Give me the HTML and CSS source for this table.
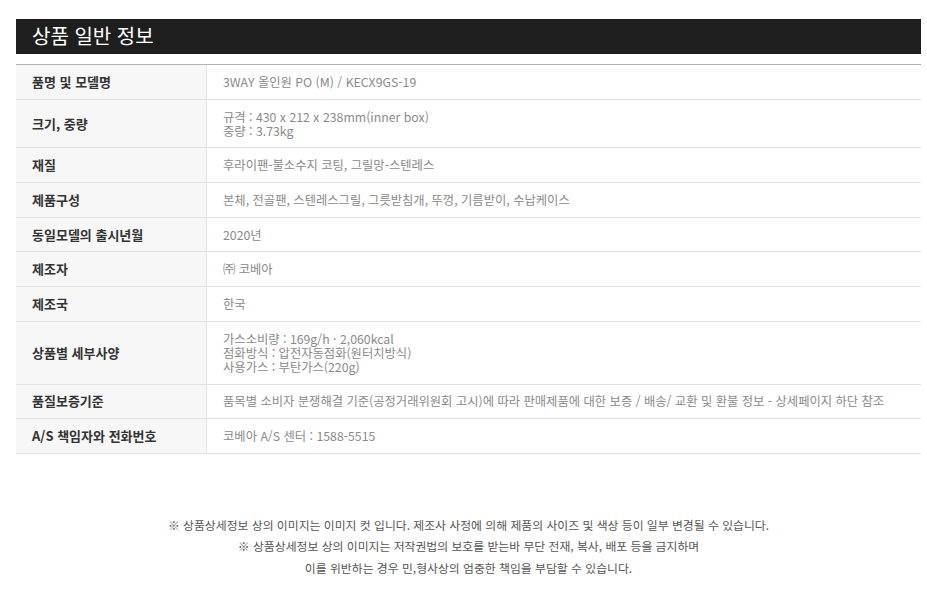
FILE: index.html
```html
<!DOCTYPE html>
<html lang="ko">
<head>
<meta charset="utf-8">
<title>상품 일반 정보</title>
<link rel="stylesheet" href="styles.css">
</head>
<body>
<div class="wrap">
  <h2 class="title">상품 일반 정보</h2>
  <div class="table">
    <div class="row"><div class="th">품명 및 모델명</div><div class="td">3WAY 올인원 PO (M) / KECX9GS-19</div></div>
    <div class="row"><div class="th">크기, 중량</div><div class="td"><span class="ln">규격 : 430 x 212 x 238mm(inner box)</span><span class="ln">중량 : 3.73kg</span></div></div>
    <div class="row"><div class="th">재질</div><div class="td">후라이팬-불소수지 코팅, 그릴망-스텐레스</div></div>
    <div class="row"><div class="th">제품구성</div><div class="td">본체, 전골팬, 스텐레스그릴, 그릇받침개, 뚜껑, 기름받이, 수납케이스</div></div>
    <div class="row"><div class="th">동일모델의 출시년월</div><div class="td">2020년</div></div>
    <div class="row"><div class="th">제조자</div><div class="td">㈜ 코베아</div></div>
    <div class="row"><div class="th">제조국</div><div class="td">한국</div></div>
    <div class="row"><div class="th">상품별 세부사양</div><div class="td"><span class="ln">가스소비량 : 169g/h · 2,060kcal</span><span class="ln">점화방식 : 압전자동점화(원터치방식)</span><span class="ln">사용가스 : 부탄가스(220g)</span></div></div>
    <div class="row"><div class="th">품질보증기준</div><div class="td">품목별 소비자 분쟁해결 기준(공정거래위원회 고시)에 따라 판매제품에 대한 보증 / 배송/ 교환 및 환불 정보 - 상세페이지 하단 참조</div></div>
    <div class="row"><div class="th">A/S 책임자와 전화번호</div><div class="td">코베아 A/S 센터 : 1588-5515</div></div>
  </div>
  <div class="notice">
    <p>※ 상품상세정보 상의 이미지는 이미지 컷 입니다. 제조사 사정에 의해 제품의 사이즈 및 색상 등이 일부 변경될 수 있습니다.</p>
    <p>※ 상품상세정보 상의 이미지는 저작권법의 보호를 받는바 무단 전재, 복사, 배포 등을 금지하며</p>
    <p>이를 위반하는 경우 민,형사상의 엄중한 책임을 부담할 수 있습니다.</p>
  </div>
</div>
</body>
</html>
```
FILE: styles.css
```css
html, body {
  margin: 0;
  padding: 0;
  background: #fff;
}
body {
  font-family: "Noto Sans CJK KR", "Noto Sans", sans-serif;
  font-size: 12px;
  color: #333;
}
.wrap {
  width: 905px;
  margin: 19px 0 0 16px;
}
.title {
  margin: 0;
  height: 35px;
  line-height: 33px;
  background: #1e1e1e;
  color: #fff;
  font-size: 20px;
  font-weight: normal;
  padding-left: 16px;
}
.table {
  margin-top: 10px;
  border-top: 1px solid #b3b3b3;
}
.row {
  display: flex;
  border-bottom: 1px solid #e2e2e2;
}
.th {
  width: 174px;
  flex: none;
  background: #f7f7f7;
  border-right: 1px solid #e2e2e2;
  padding: 0 0 0 16px;
  display: flex;
  align-items: center;
  font-weight: bold;
  font-size: 13px;
  color: #333;
  line-height: 14px;
}
.td {
  flex: 1;
  padding: 9.85px 16px;
  color: #8a8a8a;
  font-size: 12.3px;
  line-height: 14px;
}
.ln {
  display: block;
  height: 14px;
}
.notice {
  margin-top: 60px;
  text-align: center;
  color: #555;
  font-size: 11.85px;
  line-height: 21.5px;
}
.notice p {
  margin: 0;
}
```
